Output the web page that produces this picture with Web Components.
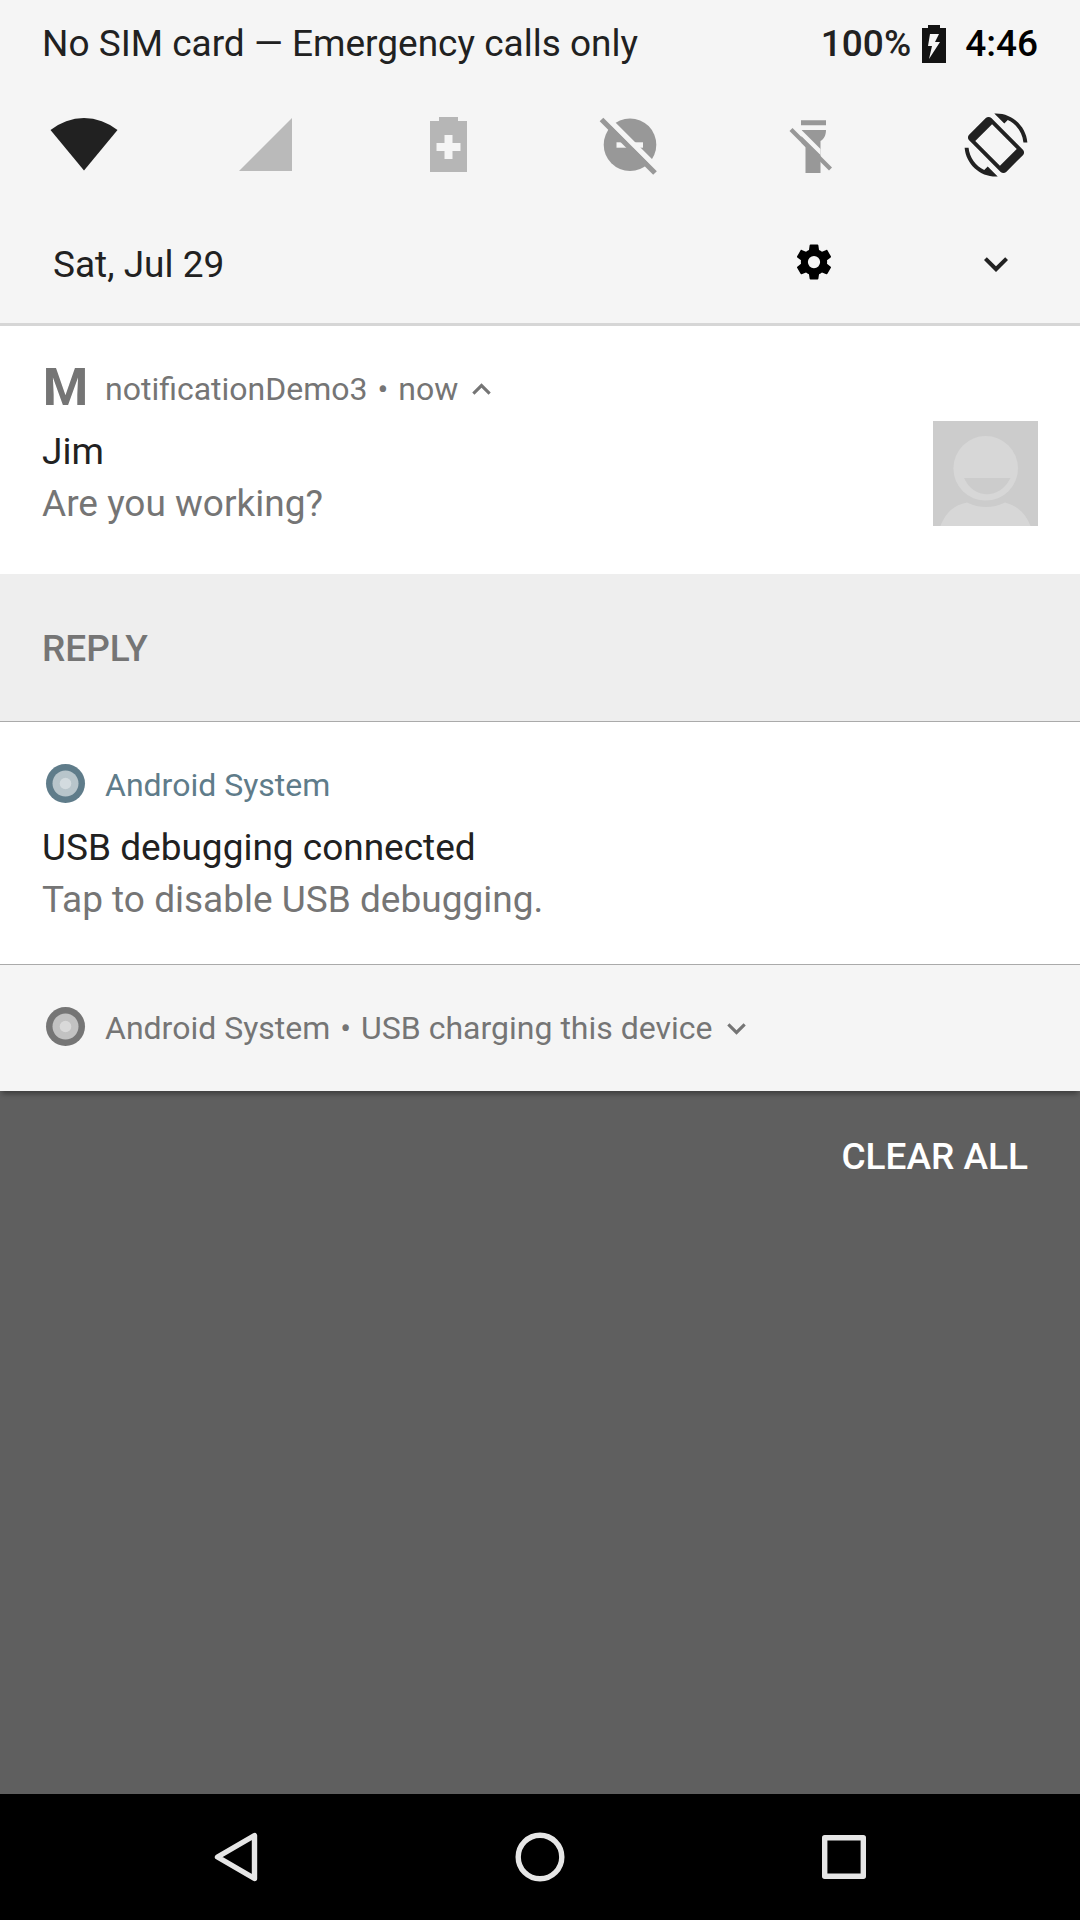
<!DOCTYPE html>
<html lang="en">
<head>
<meta charset="utf-8">
<meta name="viewport" content="width=device-width">
<title>Notification shade</title>
<style>
body { margin: 0; }
</style>
</head>
<body>
<notification-shade></notification-shade>
<script>
const base = `
  *, *::before { box-sizing: border-box; }
  svg { display: block; flex: none; }
  button { margin: 0; padding: 0; border: 0; background: none; font: inherit; color: inherit; cursor: pointer; }
`;

function define(name, css, html) {
  const template = document.createElement('template');
  template.innerHTML = `<style>${base}${css}</style>${html}`;
  customElements.define(name, class extends HTMLElement {
    constructor() {
      super();
      this.attachShadow({ mode: 'open' }).append(template.content.cloneNode(true));
    }
  });
}

define('status-bar', `
  :host { display: flex; align-items: center; justify-content: space-between; padding: 22px 42px 21px; line-height: 43px; }
  .system { display: flex; align-items: center; font-weight: 500; }
  svg { margin: 0 19px 0 11px; }
  time { color: #000; }
`, `
  <span>No SIM card — Emergency calls only</span>
  <div class="system">
    <span>100%</span>
    <svg width="24" height="38" viewBox="0 0 24 38" role="img" aria-label="Charging">
      <path fill="#131313" d="M6 0h12v3h6v35H0V3h6z"/>
      <path fill="#f5f5f5" d="M8 9h9l-4 8h5L7 34l3-13H6z"/>
    </svg>
    <time>4:46</time>
  </div>
`);

define('quick-tiles', `
  :host { display: flex; justify-content: space-between; padding: 17px 42px 0; }
  button { width: 84px; height: 84px; }
`, `
  <button aria-label="Wi-Fi"><svg width="84" height="84" viewBox="0 0 84 84"><path fill="#212121" d="M8.500 27A53 53 0 0 1 75.500 27L42 67.500z"/></svg></button>
  <button aria-label="Mobile signal"><svg width="84" height="84" viewBox="0 0 84 84"><path fill="#bababa" d="M68 15v53H15z"/></svg></button>
  <button aria-label="Battery saver"><svg width="84" height="84" viewBox="0 0 84 84"><path fill="#b6b6b6" fill-rule="evenodd" d="M32 14h19v4h9v51H23V18h9zM37.500 32v8h-8v8h8v8h8v-8h8v-8h-8v-8z"/></svg></button>
  <button aria-label="Do not disturb"><svg width="84" height="84" viewBox="0 0 84 84"><circle cx="41" cy="41.700" r="26.300" fill="#989898"/><path fill="#f5f5f5" d="M27.500 39.300h26.500v5.400H27.500z"/><path stroke="#f5f5f5" stroke-width="5.500" d="M17 14l56 56"/><path stroke="#989898" stroke-width="5.200" d="M12.500 16.500L66 70"/></svg></button>
  <button aria-label="Flashlight"><svg width="84" height="84" viewBox="0 0 84 84"><path fill="#989898" d="M29 17.300h25v5H29zM29.500 27H54c0 5-2 9-5.500 11v32h-15V44L29.500 40z"/><path fill="#f5f5f5" d="M20 18l9.500 9 19 19v6L20 24zM20 26h9v14h-9z"/><path stroke="#989898" stroke-width="4.300" d="M19 26.500l39.500 39.500"/></svg></button>
  <button aria-label="Auto-rotate"><svg width="84" height="84" viewBox="-4 -4 32 32"><path fill="#212121" fill-rule="evenodd" d="M16.480 2.520c3.270 1.550 5.610 4.720 5.970 8.480h1.500C23.440 4.840 18.290 0 12 0l-.66.03 3.810 3.810zM10.230 1.750c-.59-.59-1.540-.59-2.120 0L1.750 8.110c-.59.59-.59 1.540 0 2.120l12.020 12.020c.59.59 1.540.59 2.120 0l6.360-6.360c.59-.59.59-1.540 0-2.120zM10.500 4.100l9.400 9.400-6.400 6.400-9.400-9.400zM7.520 21.480C4.250 19.940 1.910 16.760 1.550 13H.05C.56 19.160 5.710 24 12 24l.66-.03-3.810-3.810z"/></svg></button>
`);

define('date-row', `
  :host { display: flex; align-items: center; justify-content: space-between; height: 136px; padding: 18px 42px 0 53px; }
  .actions { display: flex; gap: 98px; }
  button { display: grid; place-items: center; width: 84px; height: 84px; }
`, `
  <span>Sat, Jul 29</span>
  <div class="actions">
    <button aria-label="Settings"><svg width="42" height="44" viewBox="0 0 24 25"><path d="M19.430 12.380c.04-.32.07-.64.07-.98s-.03-.66-.07-.98l2.110-1.650c.19-.15.24-.42.12-.64l-2-3.460c-.12-.22-.39-.3-.61-.22l-2.490 1c-.52-.4-1.080-.73-1.690-.98l-.38-2.650C14.460 1.580 14.250 1.400 14 1.400h-4c-.25 0-.46.18-.49.42l-.38 2.650c-.61.25-1.170.59-1.690.98l-2.490-1c-.23-.09-.49 0-.61.22l-2 3.460c-.13.22-.07.49.12.64l2.110 1.650c-.04.32-.07.65-.07.98s.03.66.07.98l-2.110 1.650c-.19.15-.24.42-.12.64l2 3.460c.12.22.39.3.61.22l2.490-1c.52.4 1.080.73 1.690.98l.38 2.650c.03.24.24.42.49.42h4c.25 0 .46-.18.49-.42l.38-2.650c.61-.25 1.170-.59 1.690-.98l2.490 1c.23.09.49 0 .61-.22l2-3.460c.12-.22.07-.49-.12-.64zM12 14.900a3.500 3.500 0 1 1 0-7 3.500 3.500 0 0 1 0 7z"/></svg></button>
    <button aria-label="Expand"><svg width="48" height="48" viewBox="0 0 24 24"><path fill="#212121" d="M16.590 8.590L12 13.170 7.410 8.590 6 10l6 6 6-6z"/></svg></button>
  </div>
`);

define('system-icon', `
  :host { display: block; }
`, `
  <svg width="47" height="46" viewBox="0 0 47 46" aria-hidden="true">
    <circle cx="23.500" cy="21.500" r="19.500" fill="currentColor"/>
    <circle cx="23.500" cy="21.500" r="13" fill="#fff" fill-opacity=".56"/>
    <circle cx="23.500" cy="21.500" r="5.800" fill="#fff" fill-opacity=".38"/>
  </svg>
`);

define('app-header', `
  :host { display: flex; align-items: center; height: 46px; font-size: 32px; line-height: 46px; color: var(--accent, #757575); }
  .icon { width: 47px; height: 46px; margin-right: 16px; font-size: 52px; font-weight: 700; line-height: 44px; text-align: center; }
  .text { display: flex; gap: 10px; }
`, `
  <div class="icon"><slot name="icon"></slot></div>
  <div class="text"><slot></slot></div>
  <slot name="toggle"></slot>
`);

define('toggle-chevron', `
  :host { display: block; margin-left: 5px; }
  :host([open]) svg { transform: rotate(180deg); }
  button { display: block; }
`, `
  <button aria-label="Toggle details"><svg width="37" height="37" viewBox="0 0 24 24"><path fill="#757575" d="M16.590 8.590L12 13.170 7.410 8.590 6 10l6 6 6-6z"/></svg></button>
`);

define('contact-photo', `
  :host { display: block; flex: none; }
`, `
  <svg width="105" height="105" viewBox="0 0 105 105" role="img" aria-label="Contact photo">
    <path fill="#ccc" d="M0 0h105v105H0z"/>
    <circle cx="52.700" cy="47.300" r="32.300" fill="#d7d7d7"/>
    <path fill="#ccc" d="M31 57h46.500C72 68 63 73.300 54 73.300S36 68 31 57z"/>
    <path fill="#d7d7d7" d="M7.500 105C12 93 20 84 34 81.500q19 9 38 0C85 85 93 93 97.500 105z"/>
  </svg>
`);

define('notification-card', `
  :host { display: block; background: #fff; }
  .main { padding: 40px 42px 38px; }
  .content { display: flex; justify-content: space-between; margin-top: 9px; }
  .lines { padding-top: 5px; line-height: 52px; }
  .lines slot { display: block; }
  .lines slot[name=text] { color: #757575; }
  :host([compact]) { background: #f5f5f5; }
  :host([compact]) .main { padding-bottom: 40px; }
  :host([compact]) .content { display: none; }
  ::slotted([slot=action]) { display: block; }
`, `
  <div class="main">
    <slot name="header"></slot>
    <div class="content">
      <div class="lines"><slot name="title"></slot><slot name="text"></slot></div>
      <slot name="photo"></slot>
    </div>
  </div>
  <slot name="action"></slot>
`);

define('action-bar', `
  :host { display: block; margin-top: 6px; background: #eee; }
  button { display: block; width: 100%; padding: 53px 42px 51px; line-height: 43px; font-weight: 500; text-align: left; color: #757575; }
`, `<button><slot></slot></button>`);

define('nav-bar', `
  :host { display: flex; height: 126px; padding: 0 84px; margin-top: auto; background: #000; }
  button { flex: 1; display: grid; place-items: center; }
  svg { fill: none; stroke: #e6e6e6; stroke-width: 5.400; stroke-linejoin: round; }
`, `
  <button aria-label="Back"><svg width="56" height="56" viewBox="0 0 56 56"><path d="M46.500 6.500v43L9.500 28z"/></svg></button>
  <button aria-label="Home"><svg width="56" height="56" viewBox="0 0 56 56"><circle cx="28" cy="28" r="21.800"/></svg></button>
  <button aria-label="Overview"><svg width="56" height="56" viewBox="0 0 56 56"><path d="M8.700 8.700h38.600v38.600H8.700z"/></svg></button>
`);

define('notification-shade', `
  :host { display: flex; flex-direction: column; min-height: 100vh; background: #5f5f5f; color: #212121; font: 400 37px Roboto, "Noto Sans", sans-serif; }
  header { background: #f5f5f5; border-bottom: 3px solid #d6d6d6; }
  main { display: flex; flex-direction: column; gap: 1px; background: #aaa; box-shadow: 0 5px 5px -2px rgba(0, 0, 0, .35); }
  .blue { --accent: #5f7c8a; }
  .clear { align-self: flex-end; margin: 44px 52px 0; line-height: 43px; font-weight: 500; color: #fff; }
`, `
  <header>
    <status-bar></status-bar>
    <quick-tiles></quick-tiles>
    <date-row></date-row>
  </header>
  <main>
    <notification-card>
      <app-header slot="header"><span slot="icon">M</span><span>notificationDemo3</span><span>•</span><span>now</span><toggle-chevron slot="toggle" open></toggle-chevron></app-header>
      <span slot="title">Jim</span>
      <span slot="text">Are you working?</span>
      <contact-photo slot="photo"></contact-photo>
      <action-bar slot="action">REPLY</action-bar>
    </notification-card>
    <notification-card class="blue">
      <app-header slot="header"><system-icon slot="icon"></system-icon><span>Android System</span></app-header>
      <span slot="title">USB debugging connected</span>
      <span slot="text">Tap to disable USB debugging.</span>
    </notification-card>
    <notification-card compact>
      <app-header slot="header"><system-icon slot="icon"></system-icon><span>Android System</span><span>•</span><span>USB charging this device</span><toggle-chevron slot="toggle"></toggle-chevron></app-header>
    </notification-card>
  </main>
  <button class="clear">CLEAR ALL</button>
  <nav-bar></nav-bar>
`);
</script>
</body>
</html>
